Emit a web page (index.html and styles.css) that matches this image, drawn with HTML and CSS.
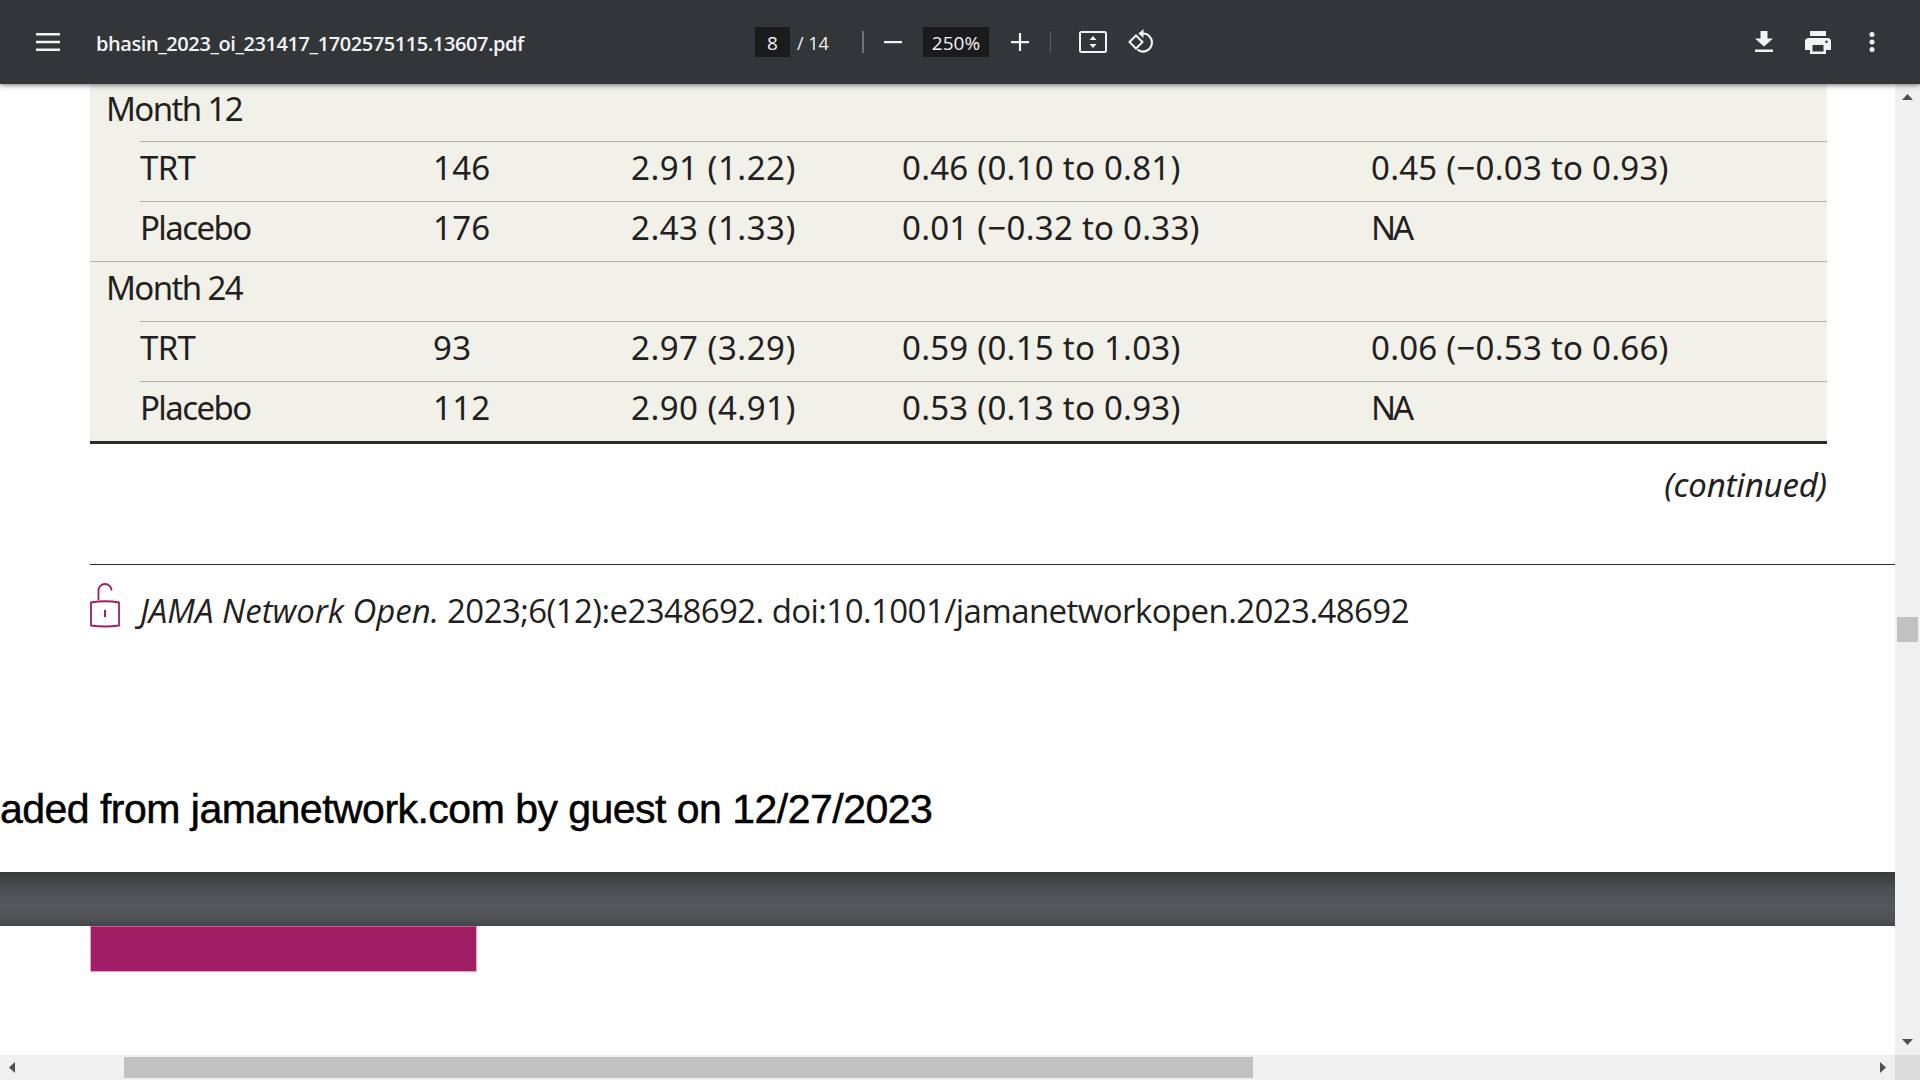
FILE: index.html
```html
<!DOCTYPE html>
<html lang="en">
<head>
<meta charset="utf-8">
<title>bhasin_2023_oi_231417_1702575115.13607.pdf</title>
<link rel="stylesheet" href="styles.css">
</head>
<body>
<div class="app">
  <header class="toolbar">
    <svg class="icon-menu" width="24" height="18" viewBox="0 0 24 18"><path d="M0 0h24v2.400H0zM0 7.800h24v2.400H0zM0 15.600h24V18H0z" fill="#f1f3f4"/></svg>
    <div class="filename">bhasin_2023_oi_231417_1702575115.13607.pdf</div>
    <div class="pager">
      <span class="field field-page">8</span>
      <span class="total">/ 14</span>
    </div>
    <span class="sep sep-a"></span>
    <svg class="icon-minus" width="18" height="18" viewBox="0 0 18 18"><path d="M0 8h18v2.200H0z" fill="#f1f3f4"/></svg>
    <span class="field field-zoom">250%</span>
    <svg class="icon-plus" width="18" height="18" viewBox="0 0 18 18"><path d="M0 8h18v2.200H0zM7.900 0h2.200v18H7.900z" fill="#f1f3f4"/></svg>
    <span class="sep sep-b"></span>
    <svg class="icon-fit" width="28" height="22" viewBox="0 0 28 22"><rect x="1" y="1" width="26" height="20" rx="1.500" fill="none" stroke="#f1f3f4" stroke-width="2"/><path d="M14 5l3.500 4h-7zM14 17l-3.500-4h7z" fill="#f1f3f4"/></svg>
    <svg class="icon-rotate" width="27" height="26" viewBox="0 0 27 26"><path d="M11 4.500h4a9 9 0 1 1-5.500 16.200" fill="none" stroke="#f1f3f4" stroke-width="2.200"/><path d="M15.500 0v9l-5-4.500z" fill="#f1f3f4"/><path d="M8 9.500l6.500 6.500-6.500 6.500-6.500-6.500z" transform="translate(0 -3)" fill="none" stroke="#f1f3f4" stroke-width="2"/></svg>
    <svg class="icon-download" width="18" height="21" viewBox="0 0 18 21"><path d="M5.500 0h7v7.500H18L9 15.500 0 7.500h5.500zM0 18.500h18V21H0z" fill="#f1f3f4"/></svg>
    <svg class="icon-print" width="26" height="23" viewBox="0 0 26 23"><path fill-rule="evenodd" d="M5 0h16v5H5zM3.500 7h19A3.500 3.500 0 0 1 26 10.500V19h-5v4H5v-4H0v-8.500A3.500 3.500 0 0 1 3.500 7zM7.500 14v6.500h11V14zM21.500 9.500a1.300 1.300 0 1 0 0 2.600 1.300 1.300 0 0 0 0-2.600z" fill="#f1f3f4"/></svg>
    <svg class="icon-more" width="6" height="20" viewBox="0 0 6 20"><circle cx="3" cy="2.500" r="2.500" fill="#f1f3f4"/><circle cx="3" cy="10" r="2.500" fill="#f1f3f4"/><circle cx="3" cy="17.500" r="2.500" fill="#f1f3f4"/></svg>
  </header>

  <div class="viewer">
    <main class="page">
      <section class="table">
        <div class="row group first"><span class="c-label">Month 12</span></div>
        <div class="row sub line"><span class="c-trt">TRT</span><span>146</span><span class="c-mean">2.91 (1.22)</span><span>0.46 (0.10 to 0.81)</span><span>0.45 (−0.03 to 0.93)</span></div>
        <div class="row sub line"><span class="c-label">Placebo</span><span>176</span><span class="c-mean">2.43 (1.33)</span><span>0.01 (−0.32 to 0.33)</span><span class="c-word">NA</span></div>
        <div class="row group line"><span class="c-label">Month 24</span></div>
        <div class="row sub line"><span class="c-trt">TRT</span><span>93</span><span class="c-mean">2.97 (3.29)</span><span>0.59 (0.15 to 1.03)</span><span>0.06 (−0.53 to 0.66)</span></div>
        <div class="row sub line"><span class="c-label">Placebo</span><span>112</span><span class="c-mean">2.90 (4.91)</span><span>0.53 (0.13 to 0.93)</span><span class="c-word">NA</span></div>
      </section>
      <div class="continued">(continued)</div>
      <footer class="cite">
        <svg class="icon-lock" width="30" height="46" viewBox="0 0 30 46"><path d="M8.500 18V8.500a6.500 6.500 0 0 1 13 0" fill="none" stroke="#a21e64" stroke-width="1.800"/><path d="M1 20.500q14-2.500 28 0v23q-14 2-28 0z" fill="none" stroke="#a21e64" stroke-width="1.800"/><path d="M15 28v7" stroke="#a21e64" stroke-width="2"/></svg>
        <p class="cite-text"><em>JAMA Network Open.</em> 2023;6(12):e2348692. doi:10.1001/jamanetworkopen.2023.48692</p>
      </footer>
      <div class="download-note">aded from jamanetwork.com by guest on 12/27/2023</div>
      <div class="page-gap"></div>
      <div class="next-page"><div class="next-bar"></div></div>
    </main>
    <aside class="vscroll">
      <svg class="arrow" width="11" height="6" viewBox="0 0 11 6"><path d="M5.500 0L11 6H0z" fill="#505050"/></svg>
      <div class="vthumb"></div>
      <svg class="arrow" width="11" height="6" viewBox="0 0 11 6"><path d="M5.500 6L0 0h11z" fill="#505050"/></svg>
    </aside>
  </div>

  <div class="hscroll">
    <svg class="arrow-left" width="6" height="11" viewBox="0 0 6 11"><path d="M0 5.500L6 0v11z" fill="#505050"/></svg>
    <div class="hthumb"></div>
    <svg class="arrow-right" width="6" height="11" viewBox="0 0 6 11"><path d="M6 5.500L0 11V0z" fill="#505050"/></svg>
    <div class="corner"></div>
  </div>
</div>
</body>
</html>
```
FILE: styles.css
```css
* { box-sizing: border-box; }
html, body { margin: 0; height: 100%; overflow: hidden; background: #fff; }
.app { width: 1920px; height: 1080px; display: flex; flex-direction: column; }

.toolbar {
  position: relative; z-index: 2;
  flex: 0 0 84px; height: 84px;
  display: flex; align-items: center;
  background: #323639; color: #f1f3f4;
  font-family: "Open Sans", sans-serif;
  box-shadow: 0 1px 5px rgba(0,0,0,.55);
}
.toolbar svg { flex: none; display: block; }
.icon-menu { margin-left: 36px; }
.filename { margin-left: 36px; padding-top: 2px; width: 426px; font-size: 20px; letter-spacing: -.42px; white-space: nowrap; font-weight: 600; }
.pager { margin-left: 233px; display: flex; align-items: center; }
.field { background: #191b1c; height: 30px; display: flex; align-items: center; justify-content: center; font-size: 19px; padding-top: 1px; }
.field-page { width: 35px; }
.total { margin-left: 7px; width: 65px; font-size: 18px; padding-top: 1px; white-space: nowrap; }
.sep { width: 2px; height: 22px; background: #6f7375; }
.icon-minus { margin-left: 20px; }
.field-zoom { margin-left: 21px; width: 66px; }
.icon-plus { margin-left: 22px; }
.sep-b { margin-left: 21px; width: 1px; background: #5c6063; }
.icon-fit { margin-left: 28px; }
.icon-rotate { margin-left: 21px; }
.icon-download { margin-left: 600px; margin-top: -2px; }
.icon-print { margin-left: 32px; }
.icon-more { margin-left: 38px; }

.viewer { flex: 1; min-height: 0; display: flex; }
.page { flex: 0 0 1895px; overflow: hidden; background: #fff; color: #231f20; }

.table { margin: 0 68px 0 90px; background: #f1f0e9; border-bottom: 3px solid #2b2b2b; font-family: "Noto Sans", sans-serif; font-size: 33px; letter-spacing: .25px; }
.row { position: relative; height: 60px; padding-bottom: 8px; display: grid; grid-template-columns: 343px 198px 271px 469px 1fr; align-items: center; white-space: nowrap; }
.row.first { height: 57px; }
.row.line::before { content: ""; position: absolute; top: 0; right: 0; height: 1px; background: #b4b2ac; }
.row.group.line::before { left: 0; }
.row.sub.line::before { left: 50px; }
.c-label { letter-spacing: -1.600px; }
.c-word { letter-spacing: -3px; }
.c-trt { letter-spacing: -.7px; }
.c-mean { letter-spacing: .5px; }
.group .c-label { padding-left: 16px; }
.sub .c-label, .sub .c-trt { padding-left: 50px; }

.continued { margin: 17px 68px 0 0; height: 48px; line-height: 48px; text-align: right; font-family: "Noto Sans", sans-serif; font-style: italic; font-size: 33px; letter-spacing: -.2px; }

.cite { margin: 55px 0 0 90px; height: 76px; padding-top: 17px; border-top: 1px solid #2a2a2a; display: flex; align-items: flex-start; }
.icon-lock { flex: none; display: block; }
.cite-text { margin: 6px 0 0 20px; font-family: "Open Sans", sans-serif; font-size: 33px; line-height: 46px; letter-spacing: -.58px; white-space: nowrap; }
.cite-text em { letter-spacing: 0; }

.download-note { margin-top: 144px; height: 50px; line-height: 50px; font-family: "Liberation Sans", sans-serif; font-size: 41px; color: #000; white-space: nowrap; -webkit-text-stroke: .5px #000; letter-spacing: -.52px; }
.page-gap { height: 36px; }
.next-page { height: 54px; background: linear-gradient(#393b3c 0%, #4a4e50 30%, #54585b 60%, #505457 85%, #434648 100%); }
.next-bar { margin: 2px 0 0 90px; width: 387px; height: 46px; background: #a21e64; border: 1px solid #e8a5cc; border-top-color: #c65a94; position: relative; top: 54px; }

.vscroll { flex: 0 0 25px; background: #f0f0f0; display: flex; flex-direction: column; align-items: center; position: relative; }
.arrow { display: block; flex: none; margin: 10px 0; }
.vthumb { flex: none; width: 21px; height: 25px; margin: 507px 0 387px; background: #c1c1c1; }

.hscroll { flex: 0 0 25px; position: relative; background: #f0f0f0; display: flex; align-items: center; }
.arrow-left { margin-left: 9px; flex: none; }
.hthumb { margin-left: 109px; width: 1129px; height: 21px; background: #c1c1c1; flex: none; }
.arrow-right { margin-left: 627px; flex: none; }
.corner { margin-left: 9px; width: 25px; height: 25px; background: #dcdcdc; flex: none; }
```
